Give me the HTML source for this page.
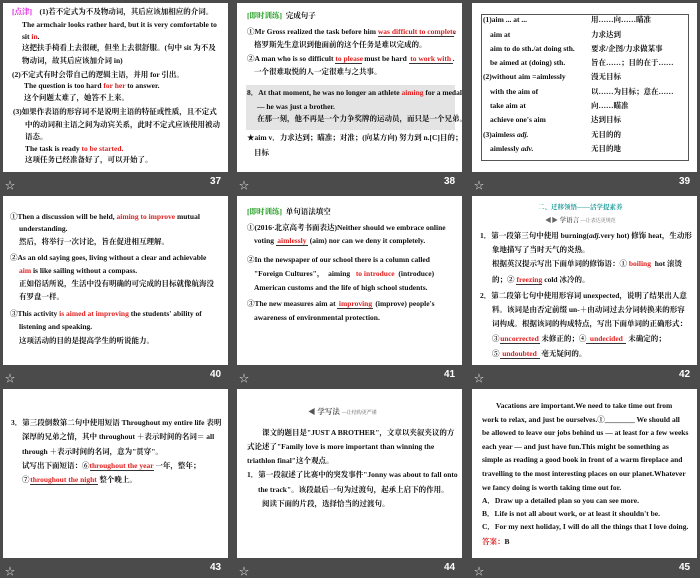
<!DOCTYPE html>
<html><head><meta charset="utf-8"><style>
body{margin:0;width:700px;height:578px;background:#4b4b4b;position:relative;overflow:hidden;font-family:"Liberation Serif","Noto Serif CJK SC",serif;}
.s{position:absolute;background:#fff;width:225px;height:169px}
.l{position:absolute;white-space:nowrap;font-size:7.5px;line-height:10px;font-weight:bold;color:#111}
.r{color:#e02020}
.g{color:#1a9a1a}
.u{display:inline-block;border-bottom:1px solid #333;text-align:center;color:#e02020;line-height:8px}
.n{position:absolute;color:#fff;font:bold 10px "Liberation Sans",sans-serif}
.st{position:absolute;color:#ddd;font-size:10px}
</style></head><body>
<div class="s" style="left:3px;top:3px"></div>
<div class="s" style="left:237px;top:3px"></div>
<div class="s" style="left:472px;top:3px"></div>
<div class="s" style="left:3px;top:196px"></div>
<div class="s" style="left:237px;top:196px"></div>
<div class="s" style="left:472px;top:196px"></div>
<div class="s" style="left:3px;top:389px"></div>
<div class="s" style="left:237px;top:389px"></div>
<div class="s" style="left:472px;top:389px"></div>
<div class="st" style="left:5px;top:177px">☆</div><div class="n" style="left:210px;top:176px">37</div>
<div class="st" style="left:239px;top:177px">☆</div><div class="n" style="left:444px;top:176px">38</div>
<div class="st" style="left:474px;top:177px">☆</div><div class="n" style="left:679px;top:176px">39</div>
<div class="st" style="left:5px;top:370px">☆</div><div class="n" style="left:210px;top:369px">40</div>
<div class="st" style="left:239px;top:370px">☆</div><div class="n" style="left:444px;top:369px">41</div>
<div class="st" style="left:474px;top:370px">☆</div><div class="n" style="left:679px;top:369px">42</div>
<div class="st" style="left:5px;top:563px">☆</div><div class="n" style="left:210px;top:562px">43</div>
<div class="st" style="left:239px;top:563px">☆</div><div class="n" style="left:444px;top:562px">44</div>
<div class="st" style="left:474px;top:563px">☆</div><div class="n" style="left:679px;top:562px">45</div>

<!-- 37 -->
<div class="l" style="left:12px;top:7px"><span style="color:#e020e0">[点津]</span>&nbsp;&nbsp;&nbsp;&nbsp;(1)若不定式为不及物动词，其后应该加相应的介词。</div>
<div class="l" style="left:22px;top:20px">The armchair looks rather hard, but it is very comfortable to</div>
<div class="l" style="left:22px;top:32px">sit <span class="r">in</span>.</div>
<div class="l" style="left:22px;top:43px">这把扶手椅看上去很硬，但坐上去很舒服。(句中 sit 为不及</div>
<div class="l" style="left:22px;top:56px">物动词，故其后应该加介词 in)</div>
<div class="l" style="left:12px;top:70px">(2)不定式有时会带自己的逻辑主语，并用 for 引出。</div>
<div class="l" style="left:24px;top:81px">The question is too hard <span class="r">for her</span> to answer.</div>
<div class="l" style="left:24px;top:93px">这个问题太难了，她答不上来。</div>
<div class="l" style="left:13px;top:107px">(3)如果作表语的形容词不是说明主语的特征或性质，且不定式</div>
<div class="l" style="left:25px;top:120px">中的动词和主语之间为动宾关系，此时不定式应该使用被动</div>
<div class="l" style="left:25px;top:132px">语态。</div>
<div class="l" style="left:25px;top:144px">The task is ready <span class="r">to be started.</span></div>
<div class="l" style="left:25px;top:155px">这项任务已经准备好了，可以开始了。</div>

<!-- 38 -->
<div class="l" style="left:247px;top:11px"><span class="g">[即时训练]</span>&nbsp;&nbsp;完成句子</div>
<div class="l" style="left:247px;top:27px">①Mr Gross realized the task before him <span class="u" style="width:76px">was difficult to complete</span>.</div>
<div class="l" style="left:254px;top:40px">格罗斯先生意识到他面前的这个任务是难以完成的。</div>
<div class="l" style="left:247px;top:54px">②A man who is so difficult <span class="u" style="width:27px">to please</span> must be hard <span class="u" style="width:44px">to work with</span>.</div>
<div class="l" style="left:254px;top:67px">一个很难取悦的人一定很难与之共事。</div>
<div style="position:absolute;left:246px;top:85px;width:209px;height:45px;background:#e4e4e4"></div>
<div class="l" style="left:247px;top:88px">8．At that moment, he was no longer an athlete <span class="r">aiming</span> for a medal</div>
<div class="l" style="left:257px;top:102px">— he was just a brother.</div>
<div class="l" style="left:257px;top:114px">在那一刻，他不再是一个力争奖牌的运动员，而只是一个兄弟。</div>
<div class="l" style="left:247px;top:133px">★aim v．力求达到；瞄准；对准；(向某方向) 努力到 n.[C]目的；</div>
<div class="l" style="left:254px;top:148px">目标</div>

<!-- 39 -->
<div style="position:absolute;left:481px;top:14px;width:206px;height:145px;border:1px solid #555"></div>
<div class="l" style="left:483px;top:15px">(1)aim ... at ...</div><div class="l" style="left:591px;top:15px">用……向……瞄准</div>
<div class="l" style="left:490px;top:30px">aim at</div><div class="l" style="left:591px;top:30px">力求达到</div>
<div class="l" style="left:490px;top:44px">aim to do sth./at doing sth.</div><div class="l" style="left:591px;top:44px">要求/企图/力求做某事</div>
<div class="l" style="left:490px;top:58px">be aimed at (doing) sth.</div><div class="l" style="left:591px;top:58px">旨在……；目的在于……</div>
<div class="l" style="left:483px;top:72px">(2)without aim =aimlessly</div><div class="l" style="left:591px;top:72px">漫无目标</div>
<div class="l" style="left:490px;top:87px">with the aim of</div><div class="l" style="left:591px;top:87px">以……为目标；意在……</div>
<div class="l" style="left:490px;top:101px">take aim at</div><div class="l" style="left:591px;top:101px">向……瞄准</div>
<div class="l" style="left:490px;top:115px">achieve one's aim</div><div class="l" style="left:591px;top:115px">达到目标</div>
<div class="l" style="left:483px;top:130px">(3)aimless <i>adj.</i></div><div class="l" style="left:591px;top:130px">无目的的</div>
<div class="l" style="left:490px;top:144px">aimlessly <i>adv.</i></div><div class="l" style="left:591px;top:144px">无目的地</div>

<!-- 40 -->
<div class="l" style="left:10px;top:212px">①Then a discussion will be held, <span class="r">aiming to improve</span> mutual</div>
<div class="l" style="left:19px;top:224px">understanding.</div>
<div class="l" style="left:19px;top:237px">然后，将举行一次讨论，旨在促进相互理解。</div>
<div class="l" style="left:10px;top:253px">②As an old saying goes, living without a clear and achievable</div>
<div class="l" style="left:19px;top:266px"><span class="r">aim</span> is like sailing without a compass.</div>
<div class="l" style="left:19px;top:279px">正如俗话所说，生活中没有明确的可完成的目标就像航海没</div>
<div class="l" style="left:19px;top:292px">有罗盘一样。</div>
<div class="l" style="left:10px;top:309px">③This activity <span class="r">is aimed at improving</span> the students' ability of</div>
<div class="l" style="left:19px;top:322px">listening and speaking.</div>
<div class="l" style="left:19px;top:336px">这项活动的目的是提高学生的听说能力。</div>

<!-- 41 -->
<div class="l" style="left:247px;top:207px"><span class="g">[即时训练]</span>&nbsp;&nbsp;单句语法填空</div>
<div class="l" style="left:247px;top:223px">①(2016·北京高考书面表达)Neither should we embrace online</div>
<div class="l" style="left:254px;top:236px">voting <span class="u" style="width:32px">aimlessly</span> (aim) nor can we deny it completely.</div>
<div class="l" style="left:247px;top:255px">②In the newspaper of our school there is a column called</div>
<div class="l" style="left:254px;top:269px">"Foreign Cultures"，&nbsp;&nbsp;aiming &nbsp;&nbsp;<span class="r">to introduce</span>&nbsp;&nbsp;(introduce)</div>
<div class="l" style="left:254px;top:283px">American customs and the life of high school students.</div>
<div class="l" style="left:247px;top:299px">③The new measures aim at <span class="u" style="width:36px">improving</span> (improve) people's</div>
<div class="l" style="left:254px;top:313px">awareness of environmental protection.</div>

<!-- 42 -->
<div class="l" style="left:538px;top:203px;color:#1a9a9a;font-size:6.5px">二、迁移领悟——活学提素养</div>
<div class="l" style="left:545px;top:216px;color:#666;font-size:6.5px">◀▶ 学语言 <span style="font-weight:normal;font-size:5px">—让表达更规范</span></div>
<div class="l" style="left:480px;top:231px">1．第一段第三句中使用 burning(<i>adj.</i>very hot) 修饰 heat，生动形</div>
<div class="l" style="left:492px;top:245px">象地描写了当时天气的炎热。</div>
<div class="l" style="left:492px;top:259px">根据英汉提示写出下面单词的修饰语：① <span class="r">boiling</span> &nbsp;hot 滚烫</div>
<div class="l" style="left:492px;top:275px">的；② <span class="u" style="width:26px">freezing</span> cold 冰冷的。</div>
<div class="l" style="left:480px;top:291px">2．第二段第七句中使用形容词 unexpected，说明了结果出人意</div>
<div class="l" style="left:492px;top:305px">料。该词是由否定前缀 un-＋由动词过去分词转换来的形容</div>
<div class="l" style="left:492px;top:319px">词构成。根据该词的构成特点，写出下面单词的正确形式：</div>
<div class="l" style="left:492px;top:334px">③<span class="u" style="width:40px">uncorrected</span> 未修正的；④<span class="u" style="width:40px">undecided</span> 未确定的；</div>
<div class="l" style="left:492px;top:349px">⑤<span class="u" style="width:40px">undoubted</span> 毫无疑问的。</div>

<!-- 43 -->
<div class="l" style="left:11px;top:418px">3．第三段倒数第二句中使用短语 Throughout my entire life 表明</div>
<div class="l" style="left:22px;top:432px">深厚的兄弟之情，其中 throughout ＋表示时间的名词＝ all</div>
<div class="l" style="left:22px;top:447px">through ＋表示时间的名词，意为"贯穿"。</div>
<div class="l" style="left:22px;top:461px">试写出下面短语：⑥<span class="u" style="width:64px">throughout the year</span> 一年，整年；</div>
<div class="l" style="left:22px;top:475px">⑦<span class="u" style="width:68px">throughout the night</span> 整个晚上。</div>

<!-- 44 -->
<div class="l" style="left:308px;top:407px;color:#555">◀ 学写法 <span style="font-weight:normal;font-size:5px">—让结构更严谨</span></div>
<div class="l" style="left:262px;top:428px">课文的题目是"JUST A BROTHER"，文章以夹叙夹议的方</div>
<div class="l" style="left:247px;top:442px">式论述了"Family love is more important than winning the</div>
<div class="l" style="left:247px;top:456px">triathlon final"这个观点。</div>
<div class="l" style="left:247px;top:470px">1．第一段叙述了比赛中的突发事件"Jonny was about to fall onto</div>
<div class="l" style="left:258px;top:485px">the track"。该段最后一句为过渡句，起承上启下的作用。</div>
<div class="l" style="left:262px;top:499px">阅读下面的片段，选择恰当的过渡句。</div>

<!-- 45 -->
<div class="l" style="left:496px;top:401px">Vacations are important.We need to take time out from</div>
<div class="l" style="left:482px;top:415px">work to relax, and just be ourselves.①________ We should all</div>
<div class="l" style="left:482px;top:428px">be allowed to leave our jobs behind us — at least for a few weeks</div>
<div class="l" style="left:482px;top:442px">each year — and just have fun.This might be something as</div>
<div class="l" style="left:482px;top:455px">simple as reading a good book in front of a warm fireplace and</div>
<div class="l" style="left:482px;top:469px">travelling to the most interesting places on our planet.Whatever</div>
<div class="l" style="left:482px;top:483px">we fancy doing is worth taking time out for.</div>
<div class="l" style="left:482px;top:496px">A．Draw up a detailed plan so you can see more.</div>
<div class="l" style="left:482px;top:509px">B．Life is not all about work, or at least it shouldn't be.</div>
<div class="l" style="left:482px;top:522px">C．For my next holiday, I will do all the things that I love doing.</div>
<div class="l" style="left:482px;top:537px"><span class="r">答案：</span>B</div>
</body></html>
